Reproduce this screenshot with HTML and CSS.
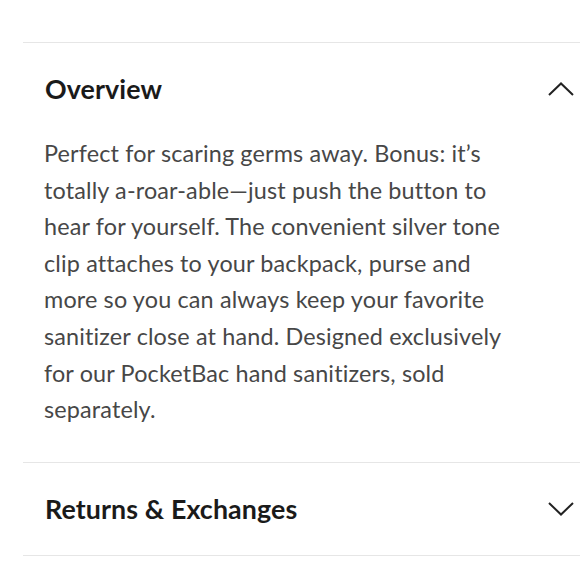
FILE: index.html
```html
<!DOCTYPE html>
<html>
<head>
<meta charset="utf-8">
<link rel="stylesheet" href="styles.css">
</head>
<body>
<div class="accordion">
  <section class="item open">
    <div class="header">
      <h2 class="title">Overview</h2>
      <svg class="chev" width="26" height="14" viewBox="0 0 26 14"><polyline points="1,13 13,1.5 25,13" fill="none" stroke="#222" stroke-width="2"/></svg>
    </div>
    <p class="body">Perfect for scaring germs away. Bonus: it’s<br>totally a-roar-able—just push the button to<br>hear for yourself. The convenient silver tone<br>clip attaches to your backpack, purse and<br>more so you can always keep your favorite<br>sanitizer close at hand. Designed exclusively<br>for our PocketBac hand sanitizers, sold<br>separately.</p>
  </section>
  <section class="item">
    <div class="header">
      <h2 class="title">Returns &amp; Exchanges</h2>
      <svg class="chev" width="26" height="14" viewBox="0 0 26 14"><polyline points="1,1 13,12.5 25,1" fill="none" stroke="#222" stroke-width="2"/></svg>
    </div>
  </section>
</div>
</body>
</html>
```
FILE: styles.css
```css
html, body {
  margin: 0;
  padding: 0;
  background: #fff;
}
.accordion {
  padding: 42px 0 0 23px;
  font-family: "Lato", "Open Sans", sans-serif;
}
.item {
  border-top: 1px solid #e6e6e6;
}
.item:last-child {
  border-bottom: 1px solid #e6e6e6;
}
.header {
  height: 92px;
  display: flex;
  align-items: center;
  justify-content: space-between;
  padding: 0 6px 0 22px;
}
.title {
  margin: 0;
  font-size: 26.8px;
  font-weight: 700;
  letter-spacing: 0.1px;
  color: #1a1a1a;
}
.chev {
  display: block;
}
.body {
  margin: 0;
  padding: 0 0 34px 21px;
  white-space: nowrap;
  font-size: 23.4px;
  letter-spacing: 0.15px;
  line-height: 36.6px;
  color: #474747;
}
```
